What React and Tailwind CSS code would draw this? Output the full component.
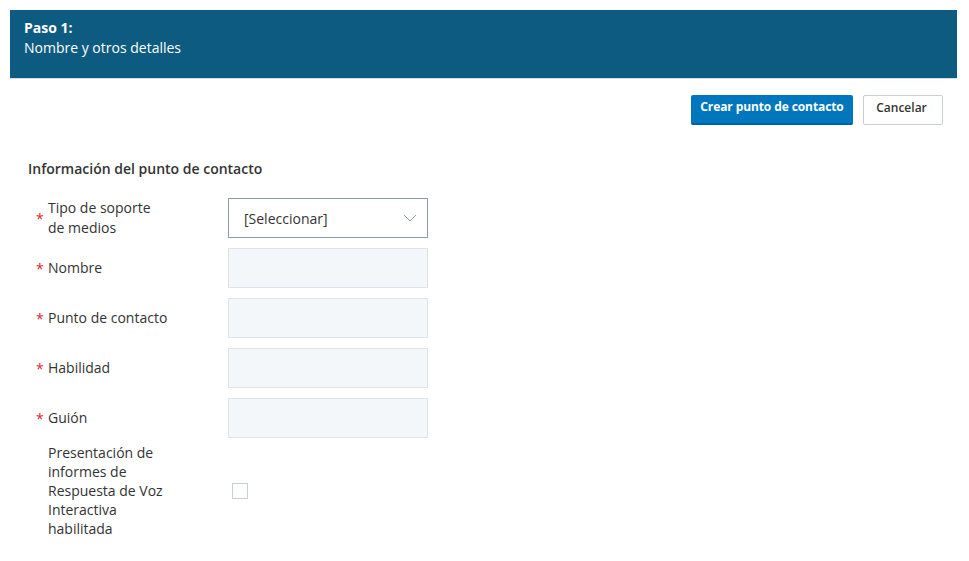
import React from "react";

const fields = ["Nombre", "Punto de contacto", "Habilidad", "Guión"];

const Req = () => (
  <span className="w-[12px] shrink-0 text-[#e0262d] text-[14px]">*</span>
);

export default function App() {
  return (
    <div
      className="min-h-screen bg-white px-[10px] pt-[10px] text-[#333333]"
      style={{ fontFamily: '"Open Sans", "Noto Sans", sans-serif' }}
    >
      <div className="h-[69px] w-[947px] bg-[#0e5b81] border-b border-[#d3dee6] pl-[14px] pt-[8px] text-white text-[14px] leading-5">
        <div className="font-bold">Paso 1:</div>
        <div>Nombre y otros detalles</div>
      </div>

      <div className="w-[947px] flex justify-end gap-[10px] pr-[14px] mt-[16px]">
        <button className="h-[30px] w-[162px] bg-[#0077bd] border-b-2 border-[#00639e] rounded-[2px] text-white text-[12px] font-bold tracking-[-0.1px] pb-[5px]">
          Crear punto de contacto
        </button>
        <button className="h-[30px] w-[80px] bg-white border border-[#c7d0d8] rounded-[2px] text-[#333] text-[12px] font-semibold pb-[4px] pr-[3px]">
          Cancelar
        </button>
      </div>

      <div className="pl-[18px] mt-[34px] text-[14px] leading-5 font-semibold">
        Información del punto de contacto
      </div>

      <div className="pl-[26px] mt-[19px] text-[14px]">
        <div className="flex flex-col gap-[10px]">
          <div className="flex items-center h-[40px]">
            <div className="w-[192px] flex items-center">
              <Req />
              <span className="w-[120px] leading-5">Tipo de soporte de medios</span>
            </div>
            <div className="w-[200px] h-[40px] border border-[#8a9aab] bg-white flex items-center justify-between pl-[15px] pr-[10px]">
              <span>[Seleccionar]</span>
              <svg width="14" height="8" viewBox="0 0 14 8" fill="none">
                <path d="M1 1l6 6 6-6" stroke="#8d9cab" strokeWidth="1" />
              </svg>
            </div>
          </div>
          {fields.map((f) => (
            <div key={f} className="flex items-center h-[40px]">
              <div className="w-[192px] flex items-center">
                <Req />
                <span className="leading-5">{f}</span>
              </div>
              <div className="w-[200px] h-[40px] border border-[#dde4ea] bg-[#f3f7fa]" />
            </div>
          ))}
        </div>

        <div className="flex items-center mt-[5px]">
          <div className="w-[192px] flex">
            <span className="w-[12px] shrink-0" />
            <span className="w-[120px] leading-[19px]">
              Presentación de informes de Respuesta de Voz Interactiva habilitada
            </span>
          </div>
          <div className="ml-[4px] w-[16px] h-[16px] border border-[#c5d0da] bg-white" />
        </div>
      </div>
    </div>
  );
}
